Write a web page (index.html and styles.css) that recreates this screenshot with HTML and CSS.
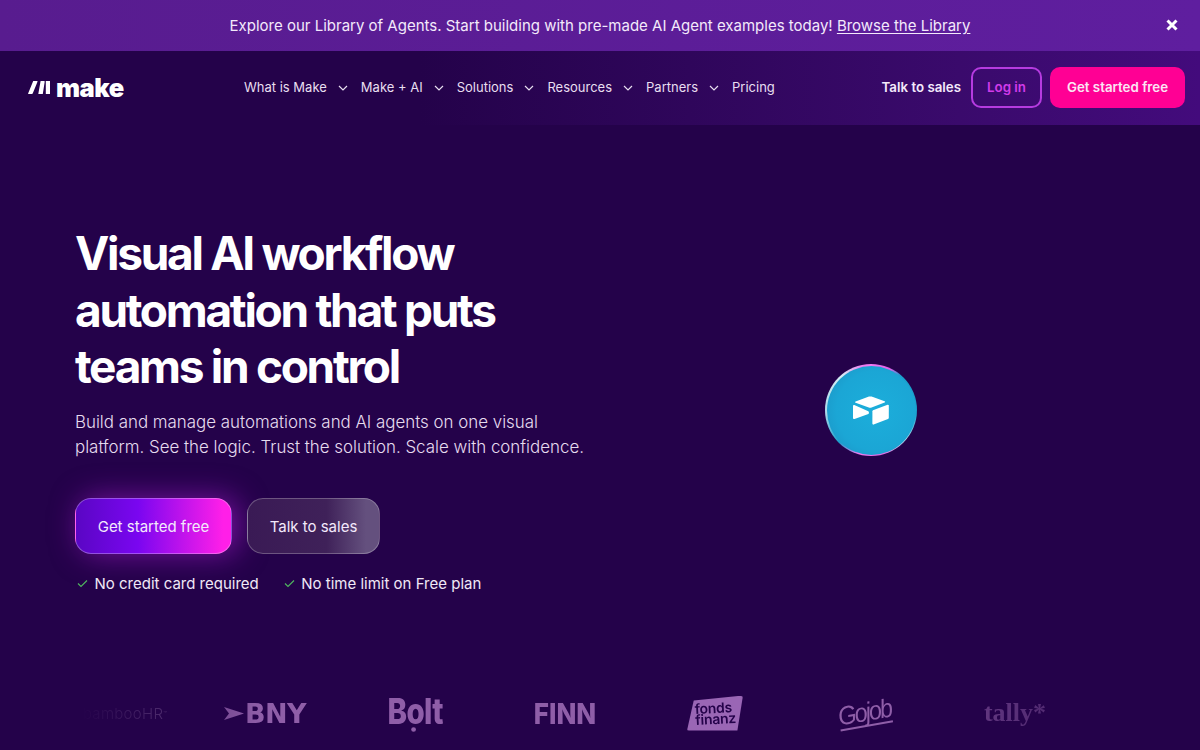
FILE: index.html
```html
<!DOCTYPE html>
<html lang="en">
<head>
    <meta charset="UTF-8">
    <meta name="viewport" content="width=device-width, initial-scale=1.0">
    <title>Make</title>
    <link rel="stylesheet" href="styles.css">
</head>
<body>
    <div class="banner">
        <p class="banner-text">Explore our Library of Agents. Start building with pre-made AI Agent examples today! <a href="#">Browse the Library</a></p>
        <svg class="banner-close" width="12" height="12" viewBox="0 0 12 12"><path d="M1.5 1.5l9 9M10.5 1.5l-9 9" stroke="#fff" stroke-width="3" fill="none"/></svg>
    </div>

    <header class="nav">
        <a class="logo" href="#">
            <svg width="22" height="13" viewBox="0 0 22 13"><path d="M5.200 0h3.800q.8 0 .5.7L4.800 12.300a1 1 0 0 1-.9.7H.7q-.8 0-.5-.7zM12.600 0h3.600q.6 0 .5.7L14.800 13H10.300zM17.800 0h4.200v13h-4.200z" fill="#fff"/></svg>
            <span>make</span>
        </a>
        <nav class="nav-links">
            <a href="#">What is Make <svg class="chev" width="10" height="6" viewBox="0 0 10 6"><path d="M1 1l4 4 4-4" stroke="#e8dff0" stroke-width="1.2" fill="none"/></svg></a>
            <a href="#">Make + AI <svg class="chev" width="10" height="6" viewBox="0 0 10 6"><path d="M1 1l4 4 4-4" stroke="#e8dff0" stroke-width="1.2" fill="none"/></svg></a>
            <a href="#">Solutions <svg class="chev" width="10" height="6" viewBox="0 0 10 6"><path d="M1 1l4 4 4-4" stroke="#e8dff0" stroke-width="1.2" fill="none"/></svg></a>
            <a href="#">Resources <svg class="chev" width="10" height="6" viewBox="0 0 10 6"><path d="M1 1l4 4 4-4" stroke="#e8dff0" stroke-width="1.2" fill="none"/></svg></a>
            <a href="#">Partners <svg class="chev" width="10" height="6" viewBox="0 0 10 6"><path d="M1 1l4 4 4-4" stroke="#e8dff0" stroke-width="1.2" fill="none"/></svg></a>
            <a href="#">Pricing</a>
        </nav>
        <div class="nav-actions">
            <a class="nav-sales" href="#">Talk to sales</a>
            <a class="btn-login" href="#">Log in</a>
            <a class="btn-start" href="#">Get started free</a>
        </div>
    </header>

    <main class="hero">
        <section class="hero-copy">
            <h1>Visual AI workflow automation that puts teams in control</h1>
            <p class="lead">Build and manage automations and AI agents on one visual platform. See the logic. Trust the solution. Scale with confidence.</p>
            <div class="cta">
                <a class="cta-primary" href="#">Get started free</a>
                <a class="cta-secondary" href="#">Talk to sales</a>
            </div>
            <ul class="checks">
                <li><svg width="11" height="9" viewBox="0 0 11 9"><path d="M1 4.500l3 3 6-6" stroke="#4fb35f" stroke-width="1.2" fill="none"/></svg>No credit card required</li>
                <li><svg width="11" height="9" viewBox="0 0 11 9"><path d="M1 4.500l3 3 6-6" stroke="#4fb35f" stroke-width="1.2" fill="none"/></svg>No time limit on Free plan</li>
            </ul>
        </section>
        <div class="hero-art">
            <div class="sphere">
                <div class="sphere-core">
                    <svg width="36" height="29" viewBox="0 0 36 29"><path d="M16 .6a4 4 0 0 1 2.600 0l13 4.600c.7.3.7.9 0 1.200l-13 5a4 4 0 0 1-2.800 0L2.600 6.700c-.7-.3-.7-1 0-1.300z" fill="#fff"/><path d="M20 14.200l14.600-5.500c.6-.2 1.200.2 1.200.8v12.300c0 .5-.3 1-.8 1.200l-14.400 5.600c-.6.2-1.200-.2-1.200-.8V15.300c0-.5.2-.9.6-1.100z" fill="#fff"/><path d="M0 9.800c0-.7.7-1.100 1.300-.8l14 6.300c.4.200.6.500.6.900v.9c0 .4-.2.700-.5.900L1.500 23c-.7.300-1.500-.2-1.500-.9z" fill="#fff"/></svg>
                </div>
            </div>
        </div>
    </main>

    <div class="logos">
        <span class="logo-item logo-bamboo">bambooHR<sup>™</sup></span>
        <span class="logo-item logo-bny"><svg width="20" height="13" viewBox="0 0 20 13"><path d="M0 0l20 6.500L0 13l5-6.500z" fill="currentColor"/></svg>BNY</span>
        <span class="logo-item logo-bolt"><span>Bolt</span></span>
        <span class="logo-item logo-finn"><span>FINN</span></span>
        <span class="logo-item"><span class="logo-fonds"><span>fonds<br>finanz</span></span></span>
        <span class="logo-item"><span class="logo-gojob">Gojob</span></span>
        <span class="logo-item logo-tally">tally*</span>
    </div>
</body>
</html>
```

FILE: styles.css
```css
* {
    box-sizing: border-box;
}
body {
    margin: 0;
    height: 750px;
    overflow: hidden;
    background-color: #24024a;
    color: #fff;
    font-family: Inter, "Liberation Sans", sans-serif;
}
a {
    color: inherit;
    text-decoration: none;
}
.banner {
    height: 51px;
    display: flex;
    align-items: center;
    justify-content: center;
    background: linear-gradient(90deg, #581c8f, #5f1e9f);
    position: relative;
}
.banner-text {
    margin: 0;
    font-size: 15px;
    color: #f3e9fb;
}
.banner-text a {
    text-decoration: underline;
    text-underline-offset: 2px;
}
.banner-close {
    position: absolute;
    right: 22px;
    top: 19px;
}
.nav {
    height: 74px;
    display: flex;
    align-items: center;
    padding: 0 15px 2px 28px;
    background: linear-gradient(90deg, #24024a 35%, #3a0a6c 80%, #430b7c);
}
.logo {
    display: flex;
    align-items: center;
    gap: 6px;
    width: 216px;
    font-size: 25.500px;
    font-weight: 900;
    letter-spacing: -0.02em;
}
.nav-links {
    display: flex;
    gap: 13px;
    font-size: 13px;
    color: #e8dff0;
}
.nav-links a {
    display: flex;
    align-items: center;
    gap: 11px;
}
.chev {
    margin-top: 2px;
}
.nav-actions {
    margin-left: auto;
    display: flex;
    align-items: center;
    gap: 8px;
    font-size: 13.300px;
    font-weight: 600;
}
.nav-sales {
    margin-right: 2px;
    color: #f3e9fb;
}
.btn-login {
    width: 71px;
    height: 41px;
    display: flex;
    align-items: center;
    justify-content: center;
    border: 2px solid #b63be0;
    border-radius: 10px;
    color: #d23bea;
}
.btn-start {
    width: 135px;
    height: 41px;
    display: flex;
    align-items: center;
    justify-content: center;
    border-radius: 10px;
    background-color: #ff0094;
    color: #fbe6f4;
}
.hero {
    display: flex;
    height: 540px;
    padding: 100px 0 0 75px;
}
.hero-copy {
    width: 530px;
}
h1 {
    margin: 0;
    font-size: 46px;
    line-height: 56.500px;
    font-weight: 700;
    letter-spacing: -2.300px;
    width: 460px;
}
.lead {
    margin: 15px 0 0;
    font-size: 16.900px;
    line-height: 25px;
    font-weight: 300;
    color: #e6dcef;
    width: 520px;
}
.cta {
    display: flex;
    gap: 15px;
    margin-top: 38px;
    font-size: 15px;
}
.cta a {
    height: 56px;
    padding-top: 1px;
    display: flex;
    align-items: center;
    justify-content: center;
    border-radius: 16px;
    color: #f3e9fb;
}
.cta-primary {
    width: 157px;
    background: linear-gradient(90deg, #5a06c4, #7a06f0 40%, #ff1fe8 95%);
    border: 1px solid rgba(255,255,255,0.3);
    box-shadow: 6px 0 30px rgba(190,30,230,0.55);
}
.cta-secondary {
    width: 133px;
    background: linear-gradient(90deg, #3a1a55, #3f2159 60%, #64507e 90%);
    border: 1px solid rgba(255,255,255,0.25);
}
.checks {
    display: flex;
    gap: 25px;
    list-style: none;
    margin: 20px 0 0;
    padding: 0 0 0 2px;
    font-size: 15px;
    color: #f0e8f6;
    line-height: 20px;
}
.checks li {
    display: flex;
    align-items: center;
    gap: 6.500px;
}
.hero-art {
    flex: 1;
    display: flex;
    padding: 139px 0 0 220px;
}
.sphere {
    width: 92px;
    height: 92px;
    padding: 1.500px;
    border-radius: 50%;
    background: conic-gradient(#f07af0 0deg, #e05fe8 25deg, #1a9fcc 40deg, #1a9fcc 95deg, #b5e2ee 130deg, #e56be6 165deg, #f07af0 195deg, #1a9fcc 225deg, #a9d9e8 265deg, #d6edf4 320deg, #f07af0 350deg);
}
.sphere-core {
    width: 100%;
    height: 100%;
    border-radius: 50%;
    display: flex;
    align-items: center;
    justify-content: center;
    background: radial-gradient(circle at 55% 50%, #1caedb, #1ba6d5 60%, #1c8fc0);
}
.logos {
    display: grid;
    grid-template-columns: repeat(7, 150px);
    padding: 26px 0 0 40px;
    color: #8f5ea8;
    -webkit-mask-image: linear-gradient(90deg, transparent 80px, #000 260px, #000 900px, rgba(0,0,0,0.6) 1040px);
}
.logo-item {
    height: 44px;
    display: flex;
    align-items: center;
    justify-content: center;
}
.logo-bamboo {
    padding-left: 20px;
    font-size: 15px;
    font-weight: 300;
    letter-spacing: 0.02em;
    color: #7c5a95;
}
.logo-bamboo sup {
    font-size: 6px;
}
.logo-bny {
    gap: 1px;
    font-family: "DejaVu Sans", sans-serif;
    font-size: 27px;
    font-weight: 700;
    letter-spacing: -0.02em;
}
.logo-bolt span {
    position: relative;
    top: -3px;
    font-size: 31px;
    font-weight: 800;
    letter-spacing: -0.02em;
    transform: scale(0.95, 1.150);
}
.logo-bolt span::after {
    content: "";
    position: absolute;
    left: 42%;
    bottom: 0;
    width: 5px;
    height: 4px;
    border-radius: 50%;
    background-color: currentColor;
}
.logo-finn span {
    font-size: 26px;
    font-weight: 800;
    transform: scale(1, 1.100);
}
.logo-fonds {
    width: 56px;
    height: 35px;
    display: flex;
    align-items: center;
    justify-content: center;
    background-color: #9a66b5;
    color: #24024a;
    font-size: 14px;
    line-height: 11px;
    font-weight: 600;
    letter-spacing: -0.3px;
    border-radius: 2px;
    clip-path: polygon(12% 14%, 100% 0, 90% 100%, 0 100%);
}
.logo-fonds span {
    transform: rotate(-3deg);
}
.logo-gojob {
    font-family: "Liberation Sans", sans-serif;
    font-style: italic;
    font-size: 26px;
    letter-spacing: -2px;
    border-bottom: 2px solid currentColor;
    line-height: 26px;
    transform: rotate(-10deg) scaleX(0.9);
}
.logo-tally {
    font-family: "Liberation Serif", serif;
    font-weight: 700;
    font-size: 26px;
    color: #73478f;
}
```
